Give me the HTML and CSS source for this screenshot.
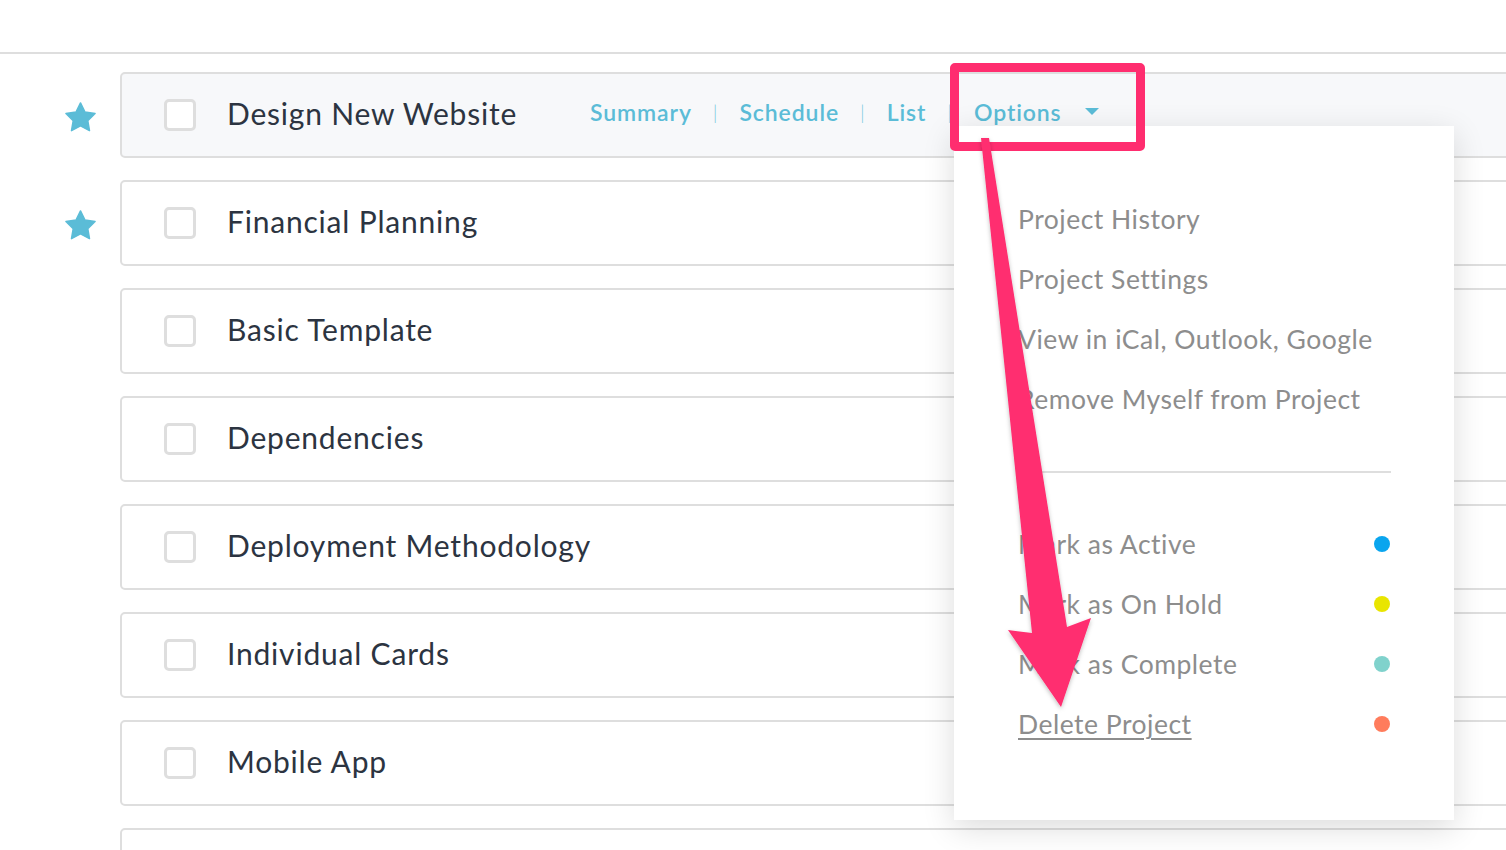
FILE: index.html
```html
<!DOCTYPE html>
<html>
<head>
<meta charset="utf-8">
<link rel="stylesheet" href="styles.css">
</head>
<body>
<div class="page">
  <div class="topbar"></div>
  <div class="list">
    <div class="row">
      <div class="star-col"><svg class="star" viewBox="0 0 24 24"><path d="M12 2l3.09 6.26L22 9.27l-5 4.87 1.18 6.88L12 17.77l-6.18 3.25L7 14.14 2 9.27l6.91-1.01L12 2z" fill="#5bbcd7" stroke="#5bbcd7" stroke-width="1" stroke-linejoin="round"/></svg></div>
      <div class="card active">
        <span class="check"></span>
        <span class="title wide">Design New Website</span>
        <nav class="nav">
          <a>Summary</a><span class="sep">|</span>
          <a>Schedule</a><span class="sep">|</span>
          <a>List</a><span class="sep">|</span>
          <a class="opt">Options</a><span class="caret"></span>
        </nav>
      </div>
    </div>
    <div class="row">
      <div class="star-col"><svg class="star" viewBox="0 0 24 24"><path d="M12 2l3.09 6.26L22 9.27l-5 4.87 1.18 6.88L12 17.77l-6.18 3.25L7 14.14 2 9.27l6.91-1.01L12 2z" fill="#5bbcd7" stroke="#5bbcd7" stroke-width="1" stroke-linejoin="round"/></svg></div>
      <div class="card"><span class="check"></span><span class="title">Financial Planning</span></div>
    </div>
    <div class="row">
      <div class="star-col"></div>
      <div class="card"><span class="check"></span><span class="title">Basic Template</span></div>
    </div>
    <div class="row">
      <div class="star-col"></div>
      <div class="card"><span class="check"></span><span class="title">Dependencies</span></div>
    </div>
    <div class="row">
      <div class="star-col"></div>
      <div class="card"><span class="check"></span><span class="title">Deployment Methodology</span></div>
    </div>
    <div class="row">
      <div class="star-col"></div>
      <div class="card"><span class="check"></span><span class="title">Individual Cards</span></div>
    </div>
    <div class="row">
      <div class="star-col"></div>
      <div class="card"><span class="check"></span><span class="title">Mobile App</span></div>
    </div>
    <div class="row">
      <div class="star-col"></div>
      <div class="card"><span class="check"></span><span class="title"></span></div>
    </div>
  </div>

  <div class="dropdown">
    <ul class="menu">
      <li>Project History</li>
      <li>Project Settings</li>
      <li>View in iCal, Outlook, Google</li>
      <li>Remove Myself from Project</li>
    </ul>
    <hr class="divider">
    <ul class="menu">
      <li>Mark as Active <span class="dot blue"></span></li>
      <li>Mark as On Hold <span class="dot yellow"></span></li>
      <li>Mark as Complete <span class="dot teal"></span></li>
      <li><u>Delete Project</u> <span class="dot orange"></span></li>
    </ul>
  </div>

  <div class="highlight"></div>
  <svg class="arrow" width="1506" height="850" viewBox="0 0 1506 850">
    <defs>
      <filter id="sh" x="-20%" y="-20%" width="140%" height="140%">
        <feDropShadow dx="0" dy="2" stdDeviation="2" flood-color="#000" flood-opacity="0.25"/>
      </filter>
    </defs>
    <polygon points="981,138 989,138 1067,627 1091,618 1061,707 1008,630 1032,633" fill="#ff2d6f" filter="url(#sh)"/>
  </svg>
</div>
</body>
</html>
```
FILE: styles.css
```css
html, body {
  margin: 0;
  padding: 0;
  background: #ffffff;
  overflow: hidden;
}
.page {
  position: relative;
  width: 1506px;
  height: 850px;
  overflow: hidden;
  font-family: "Lato", "Noto Sans", sans-serif;
}
.topbar {
  height: 52px;
  border-bottom: 2px solid #dedede;
}
.list {
  padding-top: 18px;
}
.row {
  display: flex;
  align-items: center;
  margin-bottom: 22px;
}
.star-col {
  width: 120px;
  flex: 0 0 120px;
  display: flex;
  justify-content: center;
  padding-left: 40px;
  box-sizing: border-box;
}
.star {
  width: 35px;
  height: 35px;
  margin-top: 4px;
}
.card {
  flex: 0 0 1500px;
  height: 86px;
  box-sizing: border-box;
  border: 2px solid #dedede;
  border-radius: 5px;
  background: #fff;
  display: flex;
  align-items: center;
  padding-left: 42px;
}
.card.active {
  background: #f7f8fa;
}
.check {
  width: 32px;
  height: 32px;
  box-sizing: border-box;
  border: 3px solid #dedede;
  border-radius: 5px;
  background: #fff;
  flex: 0 0 32px;
}
.title {
  margin-left: 31px;
  margin-bottom: 5px;
  font-size: 30px;
  color: #2c3441;
  letter-spacing: 0.8px;
}
.title.wide {
  flex: 0 0 363px;
}
.nav {
  display: flex;
  align-items: center;
  font-size: 23px;
  font-weight: 600;
  color: #5bbcd7;
  letter-spacing: 0.9px;
  margin-bottom: 6px;
}
.sep {
  font-weight: 300;
  font-size: 20px;
  margin: 0 21px;
  color: #7ccbe0;
}
.caret {
  width: 0;
  height: 0;
  border-left: 7px solid transparent;
  border-right: 7px solid transparent;
  border-top: 7px solid #5bbcd7;
  margin-left: 23px;
  margin-top: -1px;
}
.dropdown {
  position: absolute;
  left: 954px;
  top: 126px;
  width: 500px;
  height: 694px;
  box-sizing: border-box;
  background: #fff;
  box-shadow: 0 8px 30px rgba(0, 0, 0, 0.14);
  padding: 63px 64px 0 64px;
}
.menu {
  list-style: none;
  margin: 0;
  padding: 0;
}
.menu li {
  height: 60px;
  display: flex;
  align-items: center;
  justify-content: space-between;
  font-size: 26.5px;
  letter-spacing: 0.5px;
  color: #8d8d8d;
}
.menu u {
  text-underline-offset: 4px;
  text-decoration-thickness: 2px;
}
.divider {
  border: 0;
  border-top: 2px solid #dedede;
  margin: 42px -1px 41px 0;
}
.dot {
  width: 16px;
  height: 16px;
  border-radius: 50%;
}
.dot.blue { background: #0aa5ee; }
.dot.yellow { background: #e9e500; }
.dot.teal { background: #80d2cc; }
.dot.orange { background: #ff7c5c; }
.highlight {
  position: absolute;
  left: 950px;
  top: 63px;
  width: 195px;
  height: 88px;
  box-sizing: border-box;
  border: 9px solid #ff2d6f;
  border-radius: 5px;
}
.arrow {
  position: absolute;
  left: 0;
  top: 0;
  pointer-events: none;
}
```
